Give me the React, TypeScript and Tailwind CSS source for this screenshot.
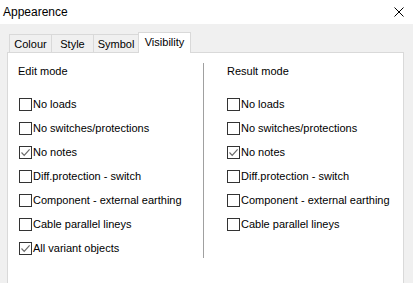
import React from 'react';

const tabs = [
  { label: 'Colour', w: 'w-[42px]' },
  { label: 'Style', w: 'w-[42px]' },
  { label: 'Symbol', w: 'w-[45px]' },
];

const editItems = [
  { label: 'No loads', checked: false },
  { label: 'No switches/protections', checked: false },
  { label: 'No notes', checked: true },
  { label: 'Diff.protection - switch', checked: false },
  { label: 'Component - external earthing', checked: false },
  { label: 'Cable parallel lineys', checked: false },
  { label: 'All variant objects', checked: true },
];

const resultItems = editItems.slice(0, 6);

const CheckBox = ({ checked }: { checked: boolean }) => (
  <span className="w-[13px] h-[13px] border border-[#333333] bg-white flex items-center justify-center shrink-0">
    {checked && (
      <svg width="11" height="11" viewBox="0 0 11 11">
        <path d="M1.5 5.5 L4.2 8.3 L9.6 2.4" fill="none" stroke="#6a6a6a" strokeWidth="1.2" />
      </svg>
    )}
  </span>
);

const Column = ({ title, items, textPad }: any) => (
  <div className="pt-[10px]">
    <div className={`h-[16px] leading-[16px] ${textPad}`}>{title}</div>
    <div className="mt-[13px]">
      {items.map((it: any) => (
        <div key={it.label} className="h-[24px] flex items-center gap-[1px]">
          <CheckBox checked={it.checked} />
          <span className="leading-[16px]">{it.label}</span>
        </div>
      ))}
    </div>
  </div>
);

export default function App() {
  return (
    <div
      className="w-[413px] h-[283px] bg-[#f0f0f0] overflow-hidden text-[11px] text-black"
      style={{ fontFamily: '"Liberation Sans", Arial, sans-serif' }}
    >
      {/* title bar */}
      <div className="h-[24px] bg-white flex items-center justify-between">
        <span className="pl-[3px] text-[12px]">Appearence</span>
        <svg width="10" height="10" viewBox="0 0 10 10" className="mr-[9px]">
          <path d="M0.5 0.5 L9.5 9.5 M9.5 0.5 L0.5 9.5" stroke="#000" strokeWidth="1" />
        </svg>
      </div>

      <div className="pl-[7px] pr-[9px] pt-[8px]">
        {/* tabs */}
        <div className="flex items-end h-[20px] pl-[2px] relative z-10">
          {tabs.map((t) => (
            <div
              key={t.label}
              className={`${t.w} h-[18px] border-t border-l border-[#d9d9d9] bg-[#f0f0f0] flex items-center justify-center leading-[16px]`}
            >
              {t.label}
            </div>
          ))}
          <div className="w-[53px] h-[21px] -mb-px border-t border-x border-[#d9d9d9] bg-white flex items-center justify-center pb-[2px] leading-[16px]">
            Visibility
          </div>
        </div>

        {/* panel */}
        <div className="h-[240px] border border-[#d9d9d9] bg-white flex">
          <div className="w-[195px] pl-[11px]">
            <Column title="Edit mode" items={editItems} textPad="-ml-[1px]" />
          </div>
          <div className="w-px h-[195px] mt-[10px] bg-[#a0a0a0]" />
          <div className="pl-[23px]">
            <Column title="Result mode" items={resultItems} textPad="" />
          </div>
        </div>
      </div>
    </div>
  );
}
